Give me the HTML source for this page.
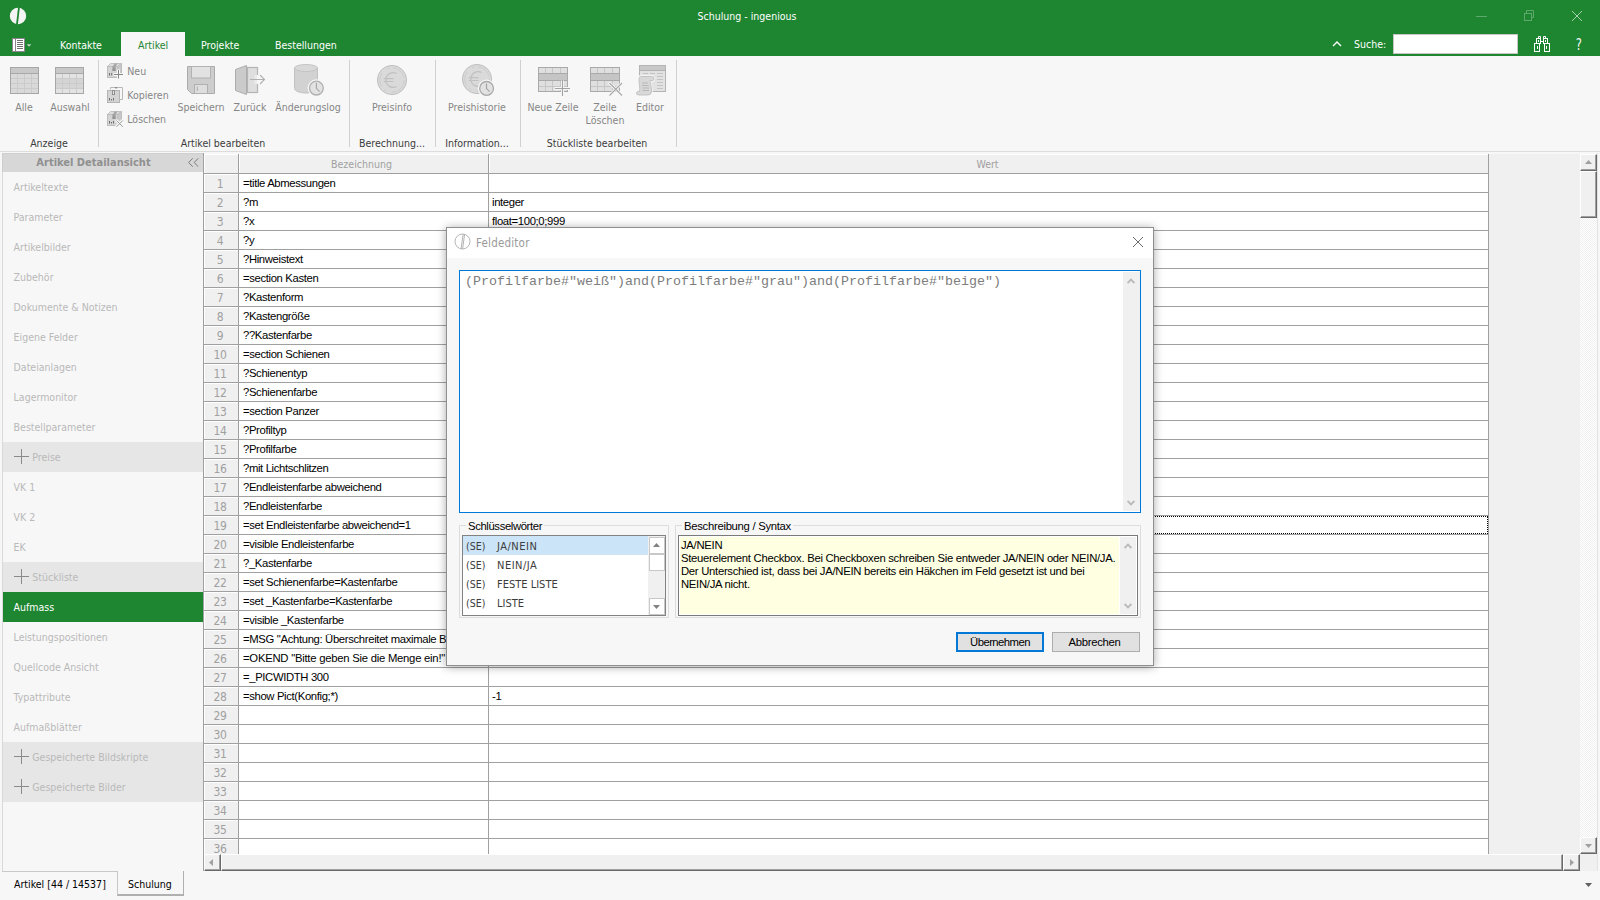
<!DOCTYPE html><html lang="de"><head><meta charset="utf-8"><title>Schulung - ingenious</title><style>
*{box-sizing:border-box;margin:0;padding:0}
html,body{width:1600px;height:900px;overflow:hidden;background:#f7f7f7}
body{position:relative;font-family:"DejaVu Sans Condensed","Liberation Sans",sans-serif;font-size:10.5px;letter-spacing:0;color:#000}
.ms{font-family:"Liberation Sans",sans-serif;font-size:11.3px;letter-spacing:-0.36px}
.a{position:absolute;white-space:pre}
.t{position:absolute;white-space:pre;line-height:14px;height:14px}
.c{text-align:center}
#top{left:0;top:0;width:1600px;height:56px;background:#1e8531}
.w{color:#fff}
.rl{color:#868686}
.gl{color:#3c3c3c}
.sep{position:absolute;top:60px;width:1px;height:87px;background:#d0d0d0}
.si{position:absolute;left:3px;width:200px;height:30px;color:#b9b9b9;padding-left:10.6px;line-height:30px;white-space:pre;letter-spacing:0}
.sg{background:#e6e6e6;padding-left:29.3px}
.sg:before{content:"";position:absolute;left:11px;top:14px;width:15px;height:1px;background:#8a8a8a}
.sg:after{content:"";position:absolute;left:18px;top:7px;width:1px;height:15px;background:#8a8a8a}
.grid{font-family:"Liberation Sans",sans-serif;font-size:11.3px;letter-spacing:-0.36px}
.hl{position:absolute;height:1px;background:#a0a0a0}
.vl{position:absolute;width:1px;background:#a0a0a0}
.rn{position:absolute;left:204px;width:34px;padding-right:3px;height:18px;background:#f0f0f0;border-left:1px solid #fff;border-top:1px solid #fff;color:#a0a0a0;text-align:center;line-height:18px;font-size:12px;letter-spacing:-0.3px;font-family:"DejaVu Sans Condensed",sans-serif}
.ct{position:absolute;height:18px;line-height:18px;white-space:pre;color:#000}
</style></head><body>
<div id="top" class="a"></div>
<svg class="a" style="left:9px;top:7px" width="18" height="18" viewBox="0 0 18 18"><ellipse cx="9" cy="9" rx="8.2" ry="8.2" fill="#f4f4f4"/><path d="M9.1 0.3 L10.9 0.3 L8.8 17.7 L7.0 17.7 Z" fill="#1e8531"/></svg>
<div class="t w c" style="left:647px;top:9px;width:200px">Schulung - ingenious</div>
<div class="a" style="left:1476px;top:16px;width:11px;height:1px;background:#5fa86b"></div>
<svg class="a" style="left:1524px;top:10px" width="11" height="12" viewBox="0 0 11 12" fill="none" stroke="#5fa86b" stroke-width="1"><rect x="0.5" y="3.5" width="7" height="7"/><path d="M2.5 3.5V0.5H9.5V7.5H7.5"/></svg>
<svg class="a" style="left:1571px;top:10px" width="12" height="12" viewBox="0 0 12 12" fill="none" stroke="#a5d0ad" stroke-width="1"><path d="M1 1L11 11M11 1L1 11"/></svg>
<svg class="a" style="left:12px;top:38px" width="22" height="14" viewBox="0 0 22 14"><rect x="0.5" y="0.5" width="12" height="13" fill="#fff" stroke="#8d828d" stroke-width="1"/><path d="M3.5 1V13" stroke="#8d828d"/><path d="M5 2.5H11M5 4.5H11M5 6.5H11M5 8.5H11M5 10.5H11" stroke="#707070" stroke-width="1"/><path d="M14.7 6.3L19.4 6.3L17.05 8.7Z" fill="#b9d6be"/></svg>
<div class="a" style="left:121px;top:32px;width:64px;height:24px;background:#f7f7f7"></div>
<div class="t w" style="left:60px;top:38px">Kontakte</div>
<div class="t" style="left:138px;top:38px;color:#1e8531">Artikel</div>
<div class="t w" style="left:201px;top:38px">Projekte</div>
<div class="t w" style="left:275px;top:38px">Bestellungen</div>
<svg class="a" style="left:1332px;top:40px" width="10" height="7" viewBox="0 0 10 7" fill="none" stroke="#fff" stroke-width="1.4"><path d="M1 6L5 2L9 6"/></svg>
<div class="t w" style="left:1354px;top:37px">Suche:</div>
<div class="a" style="left:1393px;top:34px;width:125px;height:20px;background:#fff;border:1px solid #c6c6c6"></div>
<svg class="a" style="left:1534px;top:36px" width="16" height="16" viewBox="0 0 16 16" fill="none" stroke="#fff" stroke-width="1"><rect x="0.5" y="7.5" width="5" height="8"/><rect x="10.5" y="7.5" width="5" height="8"/><rect x="2.5" y="2.5" width="4" height="5"/><rect x="9.5" y="2.5" width="4" height="5"/><path d="M4.5 2.5V0.5H6.5V2.5M9.5 2.5V0.5H11.5V2.5M6.5 5.5H9.5M3.5 10V13M12.5 10V13M4.5 4V6M11.5 4V6"/></svg>
<div class="a" style="left:1575px;top:35px;font-size:16px;line-height:20px;color:#f2f8f3;letter-spacing:0;transform:scaleX(0.8)">?</div>
<svg class="a" style="left:10px;top:67px" width="29" height="27" viewBox="0 0 29 27"><rect x="0.5" y="0.5" width="28" height="26" fill="#d9d9d9"/><rect x="1" y="1" width="27" height="5.5" fill="#c8c8c8"/><path d="M0 11.5H29M0 16.5H29M0 21.5H29M7.5 7V27M14.5 7V27M21.5 7V27" stroke="#cbcbcb" stroke-width="1" fill="none"/><path d="M0 6.5H29" stroke="#a8a8a8" fill="none"/><rect x="0.5" y="0.5" width="28" height="26" fill="none" stroke="#a6a6a6"/></svg>
<svg class="a" style="left:55px;top:67px" width="29" height="27" viewBox="0 0 29 27"><rect x="0.5" y="0.5" width="28" height="26" fill="#d9d9d9"/><rect x="1" y="7" width="27" height="4.5" fill="#e3e3e3"/><rect x="1" y="22" width="27" height="4.5" fill="#e3e3e3"/><rect x="1" y="12" width="27" height="9.5" fill="#d5d5d5"/><rect x="1" y="1" width="27" height="5.5" fill="#c8c8c8"/><path d="M0 11.5H29M0 16.5H29M0 21.5H29M7.5 7V27M14.5 7V27M21.5 7V27" stroke="#cbcbcb" stroke-width="1" fill="none"/><path d="M0 6.5H29" stroke="#a8a8a8" fill="none"/><rect x="0.5" y="0.5" width="28" height="26" fill="none" stroke="#a6a6a6"/></svg>
<div class="t rl c" style="left:4px;top:100px;width:40px">Alle</div>
<div class="t rl c" style="left:44px;top:100px;width:52px">Auswahl</div>
<div class="t gl c" style="left:8px;top:136px;width:82px">Anzeige</div>
<div class="sep" style="left:98px"></div>
<svg class="a" style="left:107px;top:63px" width="17" height="17" viewBox="0 0 17 17"><path d="M0.5 3.5L3.5 0.5H14.5L10.5 3.5Z" fill="#dedede" stroke="#c2c2c2"/><path d="M10.5 3.5L14.5 0.5V11.5L10.5 14.5Z" fill="#c8c8c8" stroke="#bdbdbd"/><rect x="0.5" y="3.5" width="10" height="11" fill="#d4d4d4" stroke="#bdbdbd"/><path d="M5.5 3.5L8 0.6H10.6L8.6 3.5Z" fill="#a6a6a6"/><rect x="5.4" y="3.5" width="3.2" height="4" fill="#9c9c9c"/><rect x="5.4" y="6.7" width="3.2" height="0.9" fill="#7e7e7e"/><path d="M2.5 10V12.5M4.7 10V12.5" stroke="#6e6e6e"/><path d="M11.5 6.5V16M6.5 11.5H16.5" stroke="#f7f7f7" stroke-width="3" fill="none"/><path d="M11.5 7V15.5M7 11.5H16" stroke="#878787" fill="none"/></svg>
<svg class="a" style="left:107px;top:87px" width="17" height="17" viewBox="0 0 17 17"><path d="M3.5 2.5V0.5H15.5V12.5H13" fill="none" stroke="#b8b8b8"/><rect x="8" y="0" width="2.2" height="1.4" fill="#8a8a8a"/><rect x="0.5" y="3.5" width="12" height="12" fill="#d4d4d4" stroke="#b4b4b4"/><rect x="5.5" y="3.5" width="2" height="4" fill="#e8e8e8" stroke="#8e8e8e"/><path d="M2.5 11V13.5M4.5 12V13.5M6.5 11V13.5" stroke="#707070"/></svg>
<svg class="a" style="left:107px;top:111px" width="17" height="17" viewBox="0 0 17 17"><path d="M0.5 3.5L3.5 0.5H14.5L10.5 3.5Z" fill="#dedede" stroke="#c2c2c2"/><path d="M10.5 3.5L14.5 0.5V11.5L10.5 14.5Z" fill="#c8c8c8" stroke="#bdbdbd"/><rect x="0.5" y="3.5" width="10" height="11" fill="#d4d4d4" stroke="#bdbdbd"/><path d="M5.5 3.5L8 0.6H10.6L8.6 3.5Z" fill="#a6a6a6"/><rect x="5.4" y="3.5" width="3.2" height="4" fill="#9c9c9c"/><rect x="5.4" y="6.7" width="3.2" height="0.9" fill="#7e7e7e"/><path d="M2.5 10V12.5M4.5 11V12.5M6.5 10V12.5" stroke="#6e6e6e"/><path d="M9 9L16 16M16 9L9 16" stroke="#f7f7f7" stroke-width="3" fill="none"/><path d="M9.5 9.5L15.8 15.8M15.8 9.5L9.5 15.8" stroke="#9c9c9c" fill="none"/></svg>
<div class="t rl" style="left:127.3px;top:64px">Neu</div>
<div class="t rl" style="left:127.3px;top:88px">Kopieren</div>
<div class="t rl" style="left:127.3px;top:112px">Löschen</div>
<svg class="a" style="left:187px;top:66px" width="28" height="28" viewBox="0 0 28 28"><path d="M0.5 0.5H27.5V27.5H4.5L0.5 23.5Z" fill="#cdcdcd" stroke="#ababab"/><rect x="4.5" y="0.5" width="19" height="11.5" fill="#e2e2e2" stroke="#b2b2b2"/><rect x="7.5" y="18.5" width="13" height="9" fill="#dedede" stroke="#b0b0b0"/><rect x="9.8" y="20.5" width="1.2" height="4.5" fill="#b4b4b4"/></svg>
<div class="t rl c" style="left:170px;top:100px;width:62px">Speichern</div>
<svg class="a" style="left:235px;top:65px" width="31" height="30" viewBox="0 0 31 30"><rect x="12.5" y="2.5" width="10" height="25" fill="#dedede" stroke="#b4b4b4" stroke-width="1.2"/><rect x="21.5" y="10" width="3" height="9" fill="#f7f7f7"/><rect x="19.5" y="10" width="2" height="9" fill="#ebebeb"/><path d="M0.5 4.5L11.5 0.5V29.5L0.5 25.5Z" fill="#cbcbcb" stroke="#adadad"/><path d="M15 14.5H29.5M25 10L29.5 14.5L25 19" fill="none" stroke="#b0b0b0" stroke-width="1.1"/></svg>
<div class="t rl c" style="left:226px;top:100px;width:48px">Zurück</div>
<svg class="a" style="left:293px;top:64px" width="32" height="33" viewBox="0 0 32 33"><path d="M1.5 4V24.5C1.5 27 7 29 13 29S24.5 27 24.5 24.5V4Z" fill="#d2d2d2" stroke="#c2c2c2"/><ellipse cx="13" cy="4" rx="11.5" ry="3.5" fill="#d9d9d9" stroke="#c4c4c4"/><circle cx="23.4" cy="24.1" r="8.8" fill="#f7f7f7"/><circle cx="23.4" cy="24.1" r="6.9" fill="#e2e2e2" stroke="#b0b0b0" stroke-width="1.3"/><path d="M23.4 18.8V24.3L26.6 27.6" fill="none" stroke="#a8a8a8" stroke-width="1.2"/></svg>
<div class="t rl c" style="left:268px;top:100px;width:80px">Änderungslog</div>
<div class="t gl c" style="left:160px;top:136px;width:126px">Artikel bearbeiten</div>
<div class="sep" style="left:349px"></div>
<svg class="a" style="left:376.2px;top:63.8px" width="36" height="36" viewBox="0 0 36 36"><circle cx="16" cy="16" r="14.6" fill="#dadada" stroke="#bfbfbf"/><circle cx="16" cy="16" r="12.3" fill="none" stroke="#c9c9c9" stroke-width="0.9" stroke-dasharray="20 5 3 4 14 6 3 3 16 3.3"/><path d="M20.8 9.5A7.4 7.4 0 1 0 20.8 22.5M7.7 14.7H17.6M7.7 17.5H17.6" fill="none" stroke="#c1c1c1" stroke-width="1.2"/></svg>
<div class="t rl c" style="left:361px;top:100px;width:62px">Preisinfo</div>
<div class="t gl c" style="left:352px;top:136px;width:80px">Berechnung...</div>
<div class="sep" style="left:435px"></div>
<svg class="a" style="left:461.0px;top:63.0px" width="36" height="36" viewBox="0 0 36 36"><circle cx="16" cy="16" r="14.6" fill="#dadada" stroke="#bfbfbf"/><circle cx="16" cy="16" r="12.3" fill="none" stroke="#c9c9c9" stroke-width="0.9" stroke-dasharray="20 5 3 4 14 6 3 3 16 3.3"/><path d="M20.8 9.5A7.4 7.4 0 1 0 20.8 22.5M7.7 14.7H17.6M7.7 17.5H17.6" fill="none" stroke="#c1c1c1" stroke-width="1.2"/><circle cx="25.6" cy="25.4" r="8.8" fill="#f7f7f7"/><circle cx="25.6" cy="25.4" r="6.9" fill="#e2e2e2" stroke="#a9a9a9" stroke-width="1.3"/><path d="M25.5 20.5V25.6L28.6 28.6" fill="none" stroke="#a4a4a4" stroke-width="1.2"/></svg>
<div class="t rl c" style="left:440px;top:100px;width:74px">Preishistorie</div>
<div class="t gl c" style="left:437px;top:136px;width:80px">Information...</div>
<div class="sep" style="left:520px"></div>
<svg class="a" style="left:538px;top:67px" width="34" height="31" viewBox="0 0 34 31"><rect x="0.5" y="0.5" width="29" height="24" fill="#dfdfdf"/><rect x="1" y="6" width="28" height="7" fill="#c5c5c5"/><path d="M0 19.5H30M7.5 0V6M14.5 0V6M22.5 0V6M7.5 13V25M14.5 13V25M22.5 13V25" stroke="#c6c6c6" fill="none"/><path d="M0 6.5H30M0 13.5H30" stroke="#a9a9a9" fill="none"/><rect x="0.5" y="0.5" width="29" height="24" fill="none" stroke="#a9a9a9"/><path d="M24.5 13.5V30M16.5 21.5H33" stroke="#f7f7f7" stroke-width="3" fill="none"/><path d="M24.5 13V29M17 21.5H32" stroke="#a2a2a2" stroke-width="1.1" fill="none"/></svg>
<svg class="a" style="left:590px;top:67px" width="34" height="31" viewBox="0 0 34 31"><rect x="0.5" y="0.5" width="29" height="24" fill="#dfdfdf"/><rect x="1" y="6" width="28" height="7" fill="#c5c5c5"/><path d="M0 19.5H30M7.5 0V6M14.5 0V6M22.5 0V6M7.5 13V25M14.5 13V25M22.5 13V25" stroke="#c6c6c6" fill="none"/><path d="M0 6.5H30M0 13.5H30" stroke="#a9a9a9" fill="none"/><rect x="0.5" y="0.5" width="29" height="24" fill="none" stroke="#a9a9a9"/><path d="M19 15.5L32.5 29M32.5 15.5L19 29" stroke="#f7f7f7" stroke-width="3" fill="none"/><path d="M19.5 16L32 28.5M32 16L19.5 28.5" stroke="#a8a8a8" stroke-width="1.1" fill="none"/></svg>
<div class="t rl c" style="left:523px;top:100px;width:60px">Neue Zeile</div>
<div class="t rl c" style="left:581px;top:100px;width:48px">Zeile</div>
<div class="t rl c" style="left:581px;top:113px;width:48px">Löschen</div>
<svg class="a" style="left:636px;top:65px" width="31" height="31" viewBox="0 0 31 31"><rect x="3.5" y="0.5" width="26" height="26" fill="#e2e2e2" stroke="#b4b4b4"/><rect x="4" y="1" width="25" height="4.5" fill="#c8c8c8"/><path d="M3 5.5H30" stroke="#b0b0b0"/><path d="M7 8.5H12M14 8.5H19M21 8.5H27M7 11.5H12M14 11.5H19M21 11.5H27M21 14.5H27M21 17.5H27M21 20.5H27M21 23.5H27" stroke="#c4c4c4" fill="none"/><path d="M4.5 11.5H15.5Q18.5 11.5 18 14.5Q17.5 16 15 15.5L14 15.5C14 19 16 23 15.5 27Q15 30.5 11 30H3Q0 30 0.5 27.5Q1 26 3.5 26.5C4.5 22 2.5 18 3 14.5Q3 11.5 4.5 11.5Z" fill="#d8d8d8" stroke="#f7f7f7" stroke-width="2.4"/><path d="M4.5 11.5H15.5Q18.5 11.5 18 14.5Q17.5 16 15 15.5L14 15.5C14 19 16 23 15.5 27Q15 30.5 11 30H3Q0 30 0.5 27.5Q1 26 3.5 26.5C4.5 22 2.5 18 3 14.5Q3 11.5 4.5 11.5Z" fill="#d8d8d8" stroke="#c0c0c0" stroke-width="0.9"/><path d="M6 18H12M6 20.5H12.5M6.5 23H13M6.5 25.5H13" stroke="#b8b8b8" fill="none"/></svg>
<div class="t rl c" style="left:625px;top:100px;width:50px">Editor</div>
<div class="t gl c" style="left:527px;top:136px;width:140px">Stückliste bearbeiten</div>
<div class="sep" style="left:676px"></div>
<div class="a" style="left:0;top:151px;width:1600px;height:1px;background:#dcdcdc"></div>
<div class="a" style="left:2px;top:153px;width:1px;height:719px;background:#d9d9d9"></div>
<div class="a" style="left:2px;top:153px;width:201px;height:19px;background:#d7d7d7;border-top:1px solid #cfcfcf;border-left:1px solid #cdcdcd"></div>
<div class="t c" style="left:3px;top:156px;width:181px;font-weight:bold;color:#909090;font-size:11px;letter-spacing:0">Artikel Detailansicht</div>
<svg class="a" style="left:188px;top:158px" width="11" height="9" viewBox="0 0 11 9" fill="none" stroke="#7a7a7a" stroke-width="1"><path d="M4.8 0.3L0.6 4.5L4.8 8.7M10.3 0.3L6.1 4.5L10.3 8.7"/></svg>
<div class="si" style="top:172px;">Artikeltexte</div>
<div class="si" style="top:202px;">Parameter</div>
<div class="si" style="top:232px;">Artikelbilder</div>
<div class="si" style="top:262px;">Zubehör</div>
<div class="si" style="top:292px;">Dokumente &amp; Notizen</div>
<div class="si" style="top:322px;">Eigene Felder</div>
<div class="si" style="top:352px;">Dateianlagen</div>
<div class="si" style="top:382px;">Lagermonitor</div>
<div class="si" style="top:412px;">Bestellparameter</div>
<div class="si sg" style="top:442px;">Preise</div>
<div class="si" style="top:472px;">VK 1</div>
<div class="si" style="top:502px;">VK 2</div>
<div class="si" style="top:532px;">EK</div>
<div class="si sg" style="top:562px;">Stückliste</div>
<div class="si" style="top:592px;background:#1e8531;color:#fff;">Aufmass</div>
<div class="si" style="top:622px;">Leistungspositionen</div>
<div class="si" style="top:652px;">Quellcode Ansicht</div>
<div class="si" style="top:682px;">Typattribute</div>
<div class="si" style="top:712px;">Aufmaßblätter</div>
<div class="si sg" style="top:742px;">Gespeicherte Bildskripte</div>
<div class="si sg" style="top:772px;">Gespeicherte Bilder</div>
<div class="a" style="left:203px;top:154px;width:1395px;height:717px;background:#f0f0f0"></div>
<div class="a" style="left:239px;top:174px;width:1250px;height:680px;background:#fff"></div>
<div class="a" style="left:203px;top:153px;width:1px;height:718px;background:#a0a0a0"></div>
<div class="a" style="left:204px;top:154px;width:34px;height:19px;border-left:1px solid #fff;border-top:1px solid #fff"></div>
<div class="a" style="left:239px;top:154px;width:249px;height:19px;border-left:1px solid #fff;border-top:1px solid #fff"></div>
<div class="a" style="left:489px;top:154px;width:999px;height:19px;border-left:1px solid #fff;border-top:1px solid #fff"></div>
<div class="t c" style="left:237px;top:157px;width:249px;color:#a0a0a0">Bezeichnung</div>
<div class="t c" style="left:488px;top:157px;width:999px;color:#a0a0a0">Wert</div>
<div class="grid">
<div class="rn" style="top:174px;height:18px">1</div>
<div class="ct" style="left:243px;top:174px;width:244px;overflow:hidden;">=title Abmessungen</div>
<div class="rn" style="top:193px;height:18px">2</div>
<div class="ct" style="left:243px;top:193px;width:244px;overflow:hidden;">?m</div>
<div class="ct" style="left:492px;top:193px">integer</div>
<div class="rn" style="top:212px;height:18px">3</div>
<div class="ct" style="left:243px;top:212px;width:244px;overflow:hidden;">?x</div>
<div class="ct" style="left:492px;top:212px">float=100;0;999</div>
<div class="rn" style="top:231px;height:18px">4</div>
<div class="ct" style="left:243px;top:231px;width:244px;overflow:hidden;">?y</div>
<div class="rn" style="top:250px;height:18px">5</div>
<div class="ct" style="left:243px;top:250px;width:244px;overflow:hidden;">?Hinweistext</div>
<div class="rn" style="top:269px;height:18px">6</div>
<div class="ct" style="left:243px;top:269px;width:244px;overflow:hidden;">=section Kasten</div>
<div class="rn" style="top:288px;height:18px">7</div>
<div class="ct" style="left:243px;top:288px;width:244px;overflow:hidden;">?Kastenform</div>
<div class="rn" style="top:307px;height:18px">8</div>
<div class="ct" style="left:243px;top:307px;width:244px;overflow:hidden;">?Kastengröße</div>
<div class="rn" style="top:326px;height:18px">9</div>
<div class="ct" style="left:243px;top:326px;width:244px;overflow:hidden;">??Kastenfarbe</div>
<div class="rn" style="top:345px;height:18px">10</div>
<div class="ct" style="left:243px;top:345px;width:244px;overflow:hidden;">=section Schienen</div>
<div class="rn" style="top:364px;height:18px">11</div>
<div class="ct" style="left:243px;top:364px;width:244px;overflow:hidden;">?Schienentyp</div>
<div class="rn" style="top:383px;height:18px">12</div>
<div class="ct" style="left:243px;top:383px;width:244px;overflow:hidden;">?Schienenfarbe</div>
<div class="rn" style="top:402px;height:18px">13</div>
<div class="ct" style="left:243px;top:402px;width:244px;overflow:hidden;">=section Panzer</div>
<div class="rn" style="top:421px;height:18px">14</div>
<div class="ct" style="left:243px;top:421px;width:244px;overflow:hidden;">?Profiltyp</div>
<div class="rn" style="top:440px;height:18px">15</div>
<div class="ct" style="left:243px;top:440px;width:244px;overflow:hidden;">?Profilfarbe</div>
<div class="rn" style="top:459px;height:18px">16</div>
<div class="ct" style="left:243px;top:459px;width:244px;overflow:hidden;">?mit Lichtschlitzen</div>
<div class="rn" style="top:478px;height:18px">17</div>
<div class="ct" style="left:243px;top:478px;width:244px;overflow:hidden;">?Endleistenfarbe abweichend</div>
<div class="rn" style="top:497px;height:18px">18</div>
<div class="ct" style="left:243px;top:497px;width:244px;overflow:hidden;">?Endleistenfarbe</div>
<div class="rn" style="top:516px;height:18px">19</div>
<div class="ct" style="left:243px;top:516px;width:244px;overflow:hidden;">=set Endleistenfarbe abweichend=1</div>
<div class="rn" style="top:535px;height:18px">20</div>
<div class="ct" style="left:243px;top:535px;width:244px;overflow:hidden;">=visible Endleistenfarbe</div>
<div class="rn" style="top:554px;height:18px">21</div>
<div class="ct" style="left:243px;top:554px;width:244px;overflow:hidden;">?_Kastenfarbe</div>
<div class="rn" style="top:573px;height:18px">22</div>
<div class="ct" style="left:243px;top:573px;width:244px;overflow:hidden;">=set Schienenfarbe=Kastenfarbe</div>
<div class="rn" style="top:592px;height:18px">23</div>
<div class="ct" style="left:243px;top:592px;width:244px;overflow:hidden;">=set _Kastenfarbe=Kastenfarbe</div>
<div class="rn" style="top:611px;height:18px">24</div>
<div class="ct" style="left:243px;top:611px;width:244px;overflow:hidden;">=visible _Kastenfarbe</div>
<div class="rn" style="top:630px;height:18px">25</div>
<div class="ct" style="left:243px;top:630px;width:244px;overflow:hidden;letter-spacing:-0.34px;">=MSG &quot;Achtung: Überschreitet maximale Breite&quot;</div>
<div class="rn" style="top:649px;height:18px">26</div>
<div class="ct" style="left:243px;top:649px;width:244px;overflow:hidden;letter-spacing:-0.25px;">=OKEND &quot;Bitte geben Sie die Menge ein!&quot;</div>
<div class="rn" style="top:668px;height:18px">27</div>
<div class="ct" style="left:243px;top:668px;width:244px;overflow:hidden;">=_PICWIDTH 300</div>
<div class="rn" style="top:687px;height:18px">28</div>
<div class="ct" style="left:243px;top:687px;width:244px;overflow:hidden;">=show Pict(Konfig;*)</div>
<div class="ct" style="left:492px;top:687px">-1</div>
<div class="rn" style="top:706px;height:18px">29</div>
<div class="rn" style="top:725px;height:18px">30</div>
<div class="rn" style="top:744px;height:18px">31</div>
<div class="rn" style="top:763px;height:18px">32</div>
<div class="rn" style="top:782px;height:18px">33</div>
<div class="rn" style="top:801px;height:18px">34</div>
<div class="rn" style="top:820px;height:18px">35</div>
<div class="rn" style="top:839px;height:16px">36</div>
</div>
<div class="hl" style="left:203px;top:173px;width:1286px"></div>
<div class="hl" style="left:203px;top:192px;width:1286px"></div>
<div class="hl" style="left:203px;top:211px;width:1286px"></div>
<div class="hl" style="left:203px;top:230px;width:1286px"></div>
<div class="hl" style="left:203px;top:249px;width:1286px"></div>
<div class="hl" style="left:203px;top:268px;width:1286px"></div>
<div class="hl" style="left:203px;top:287px;width:1286px"></div>
<div class="hl" style="left:203px;top:306px;width:1286px"></div>
<div class="hl" style="left:203px;top:325px;width:1286px"></div>
<div class="hl" style="left:203px;top:344px;width:1286px"></div>
<div class="hl" style="left:203px;top:363px;width:1286px"></div>
<div class="hl" style="left:203px;top:382px;width:1286px"></div>
<div class="hl" style="left:203px;top:401px;width:1286px"></div>
<div class="hl" style="left:203px;top:420px;width:1286px"></div>
<div class="hl" style="left:203px;top:439px;width:1286px"></div>
<div class="hl" style="left:203px;top:458px;width:1286px"></div>
<div class="hl" style="left:203px;top:477px;width:1286px"></div>
<div class="hl" style="left:203px;top:496px;width:1286px"></div>
<div class="hl" style="left:203px;top:515px;width:1286px"></div>
<div class="hl" style="left:203px;top:534px;width:1286px"></div>
<div class="hl" style="left:203px;top:553px;width:1286px"></div>
<div class="hl" style="left:203px;top:572px;width:1286px"></div>
<div class="hl" style="left:203px;top:591px;width:1286px"></div>
<div class="hl" style="left:203px;top:610px;width:1286px"></div>
<div class="hl" style="left:203px;top:629px;width:1286px"></div>
<div class="hl" style="left:203px;top:648px;width:1286px"></div>
<div class="hl" style="left:203px;top:667px;width:1286px"></div>
<div class="hl" style="left:203px;top:686px;width:1286px"></div>
<div class="hl" style="left:203px;top:705px;width:1286px"></div>
<div class="hl" style="left:203px;top:724px;width:1286px"></div>
<div class="hl" style="left:203px;top:743px;width:1286px"></div>
<div class="hl" style="left:203px;top:762px;width:1286px"></div>
<div class="hl" style="left:203px;top:781px;width:1286px"></div>
<div class="hl" style="left:203px;top:800px;width:1286px"></div>
<div class="hl" style="left:203px;top:819px;width:1286px"></div>
<div class="hl" style="left:203px;top:838px;width:1286px"></div>
<div class="vl" style="left:238px;top:154px;height:700px"></div>
<div class="vl" style="left:488px;top:154px;height:700px"></div>
<div class="vl" style="left:1488px;top:154px;height:700px"></div>
<div class="a" style="left:489px;top:516px;width:999px;height:18px;border:1px dotted #000"></div>
<div class="a" style="left:1580px;top:154px;width:17px;height:700px;background:conic-gradient(#fff 25%,#f0f0f0 0 50%,#fff 0 75%,#f0f0f0 0) 0 0/2px 2px"></div>
<div class="a" style="left:1597px;top:153px;width:1px;height:718px;background:#e3e3e3"></div>
<div class="a" style="left:1580px;top:154px;width:17px;height:17px;background:#f0f0f0;border-top:1px solid #fff;border-left:1px solid #fff;border-right:1px solid #696969;border-bottom:1px solid #696969;box-shadow:inset -1px -1px 0 #a0a0a0"><svg class="a" style="left:4px;top:5px" width="7" height="4" viewBox="0 0 7 4"><path d="M0 4L3.5 0L7 4Z" fill="#a0a0a0"/></svg></div>
<div class="a" style="left:1580px;top:171px;width:17px;height:47px;background:#f0f0f0;border-top:1px solid #fff;border-left:1px solid #fff;border-right:1px solid #696969;border-bottom:1px solid #696969;box-shadow:inset -1px -1px 0 #a0a0a0"></div>
<div class="a" style="left:1580px;top:837px;width:17px;height:17px;background:#f0f0f0;border-top:1px solid #fff;border-left:1px solid #fff;border-right:1px solid #696969;border-bottom:1px solid #696969;box-shadow:inset -1px -1px 0 #a0a0a0"><svg class="a" style="left:4px;top:6px" width="7" height="4" viewBox="0 0 7 4"><path d="M0 0L3.5 4L7 0Z" fill="#a0a0a0"/></svg></div>
<div class="a" style="left:221px;top:854px;width:1342px;height:17px;background:#f0f0f0;border-top:1px solid #fff;border-left:1px solid #fff;border-right:1px solid #696969;border-bottom:1px solid #696969;box-shadow:inset -1px -1px 0 #a0a0a0"></div>
<div class="a" style="left:204px;top:854px;width:17px;height:17px;background:#f0f0f0;border-top:1px solid #fff;border-left:1px solid #fff;border-right:1px solid #696969;border-bottom:1px solid #696969;box-shadow:inset -1px -1px 0 #a0a0a0"><svg class="a" style="left:4px;top:4px" width="4" height="7" viewBox="0 0 4 7"><path d="M4 0L0 3.5L4 7Z" fill="#a0a0a0"/></svg></div>
<div class="a" style="left:1563px;top:854px;width:17px;height:17px;background:#f0f0f0;border-top:1px solid #fff;border-left:1px solid #fff;border-right:1px solid #696969;border-bottom:1px solid #696969;box-shadow:inset -1px -1px 0 #a0a0a0"><svg class="a" style="left:6px;top:4px" width="4" height="7" viewBox="0 0 4 7"><path d="M0 0L4 3.5L0 7Z" fill="#a0a0a0"/></svg></div>
<div class="a" style="left:1580px;top:854px;width:17px;height:17px;background:#f0f0f0"></div>
<div class="a" style="left:2px;top:871px;width:116px;height:1px;background:#c8c8c8"></div>
<div class="a" style="left:117px;top:871px;width:67px;height:25px;border-left:1px solid #c8c8c8;border-right:1px solid #b0b0b0;border-bottom:2px solid #b0b0b0"></div>
<div class="t" style="left:14px;top:877px">Artikel [44 / 14537]</div>
<div class="t" style="left:128px;top:877px">Schulung</div>
<svg class="a" style="left:1585px;top:883px" width="7" height="4" viewBox="0 0 7 4"><path d="M0 0L3.5 4L7 0Z" fill="#606060"/></svg>
<div class="a" style="left:446px;top:227px;width:708px;height:439px;background:#f7f7f7;border:1px solid #8f8f8f;box-shadow:0 1px 9px 0 rgba(0,0,0,0.34)"></div>
<div class="a" style="left:447px;top:228px;width:706px;height:30px;background:#fff"></div>
<svg class="a" style="left:454.3px;top:233.4px" width="17" height="17" viewBox="0 0 17 17" fill="none" stroke="#b4b4b4" stroke-width="1"><circle cx="8.5" cy="8.5" r="7.5"/><path d="M9.2 1L7 16M10.6 1.3L8.6 16"/></svg>
<div class="t" style="left:476px;top:236px;color:#9a9a9a;font-size:11.5px;letter-spacing:0.2px">Feldeditor</div>
<svg class="a" style="left:1132px;top:236px" width="12" height="12" viewBox="0 0 12 12" fill="none" stroke="#6a6a6a" stroke-width="1"><path d="M1 1L11 11M11 1L1 11"/></svg>
<div class="a" style="left:459px;top:270px;width:682px;height:243px;background:#fff;border:1px solid #0078d7"></div>
<div class="a" style="left:1123px;top:272px;width:17px;height:239px;background:#f0f0f0"></div>
<svg class="a" style="left:1126.5px;top:278px" width="8" height="6" viewBox="0 0 8 6" fill="none" stroke="#bababa" stroke-width="1.9"><path d="M0.6 5L4 1.6L7.4 5"/></svg>
<svg class="a" style="left:1126.5px;top:500px" width="8" height="6" viewBox="0 0 8 6" fill="none" stroke="#bababa" stroke-width="1.9"><path d="M0.6 1L4 4.4L7.4 1"/></svg>
<div class="a" style="left:465px;top:274px;font-family:'Liberation Mono',monospace;font-size:13.33px;letter-spacing:0;line-height:16px;color:#7d7d7d">(Profilfarbe#&quot;weiß&quot;)and(Profilfarbe#&quot;grau&quot;)and(Profilfarbe#&quot;beige&quot;)</div>
<div class="a" style="left:459px;top:525px;width:210px;height:93px;border:1px solid #dcdcdc"></div>
<div class="t ms" style="left:466px;top:519px;background:#f7f7f7;padding:0 2px;letter-spacing:-0.38px">Schlüsselwörter</div>
<div class="a" style="left:462px;top:535px;width:204px;height:81px;background:#fff;border:1px solid #828282"></div>
<div class="a" style="left:463px;top:536px;width:185px;height:19px;background:#cce4f7"></div>
<div class="t" style="left:466px;top:539px;color:#3c3c3c">(SE)</div>
<div class="t" style="left:497px;top:539.6px;color:#3c3c3c;font-size:11px;letter-spacing:0.5px">JA/NEIN</div>
<div class="t" style="left:466px;top:558px;color:#3c3c3c">(SE)</div>
<div class="t" style="left:497px;top:558.6px;color:#3c3c3c;font-size:11px;letter-spacing:0.5px">NEIN/JA</div>
<div class="t" style="left:466px;top:577px;color:#3c3c3c">(SE)</div>
<div class="t" style="left:497px;top:577.6px;color:#3c3c3c;font-size:11px;letter-spacing:0px">FESTE LISTE</div>
<div class="t" style="left:466px;top:596px;color:#3c3c3c">(SE)</div>
<div class="t" style="left:497px;top:596.6px;color:#3c3c3c;font-size:11px;letter-spacing:0px">LISTE</div>
<div class="a" style="left:648px;top:536px;width:17px;height:79px;background:#f0f0f0"></div>
<div class="a" style="left:649px;top:537px;width:16px;height:17px;background:#fff;border:1px solid #c8c8c8"></div>
<svg class="a" style="left:653px;top:543px" width="7" height="4" viewBox="0 0 7 4"><path d="M0 4L3.5 0L7 4Z" fill="#808080"/></svg>
<div class="a" style="left:649px;top:554px;width:16px;height:17px;background:#fff;border:1px solid #c8c8c8"></div>
<div class="a" style="left:649px;top:598px;width:16px;height:17px;background:#fff;border:1px solid #c8c8c8"></div>
<svg class="a" style="left:653px;top:605px" width="7" height="4" viewBox="0 0 7 4"><path d="M0 0L3.5 4L7 0Z" fill="#808080"/></svg>
<div class="a" style="left:675px;top:525px;width:466px;height:93px;border:1px solid #dcdcdc"></div>
<div class="t ms" style="left:682px;top:519px;background:#f7f7f7;padding:0 2px;letter-spacing:-0.29px">Beschreibung / Syntax</div>
<div class="a" style="left:678px;top:535px;width:460px;height:81px;background:#fff;border:1px solid #7a7a7a"></div>
<div class="a" style="left:680px;top:537px;width:439px;height:77px;background:#ffffe1"></div>
<div class="a" style="left:1120px;top:537px;width:16px;height:77px;background:#f0f0f0"></div>
<svg class="a" style="left:1123.6px;top:543px" width="8" height="6" viewBox="0 0 8 6" fill="none" stroke="#bababa" stroke-width="1.9"><path d="M0.6 5L4 1.6L7.4 5"/></svg>
<svg class="a" style="left:1123.6px;top:603px" width="8" height="6" viewBox="0 0 8 6" fill="none" stroke="#bababa" stroke-width="1.9"><path d="M0.6 1L4 4.4L7.4 1"/></svg>
<div class="t ms" style="left:681px;top:539px;line-height:13px;height:13px;letter-spacing:-0.29px">JA/NEIN</div>
<div class="t ms" style="left:681px;top:552px;line-height:13px;height:13px;letter-spacing:-0.29px">Steuerelement Checkbox. Bei Checkboxen schreiben Sie entweder JA/NEIN oder NEIN/JA.</div>
<div class="t ms" style="left:681px;top:565px;line-height:13px;height:13px;letter-spacing:-0.29px">Der Unterschied ist, dass bei JA/NEIN bereits ein Häkchen im Feld gesetzt ist und bei</div>
<div class="t ms" style="left:681px;top:578px;line-height:13px;height:13px;letter-spacing:-0.29px">NEIN/JA nicht.</div>
<div class="a c ms" style="left:956px;top:632px;width:88px;height:20px;background:#e1e1e1;border:2px solid #0078d7;line-height:16px;letter-spacing:-0.54px">Übernehmen</div>
<div class="a c ms" style="left:1052px;top:632px;width:88px;height:20px;background:#e1e1e1;border:1px solid #adadad;line-height:18px;letter-spacing:-0.3px;padding-right:3px">Abbrechen</div>
</body></html>
